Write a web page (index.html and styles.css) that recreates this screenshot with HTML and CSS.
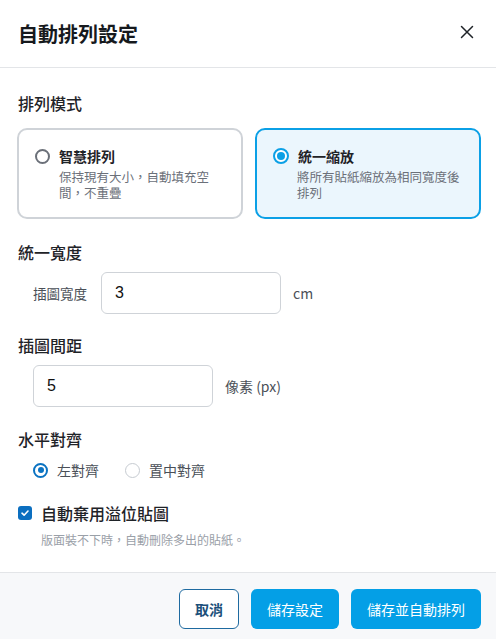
FILE: index.html
```html
<!DOCTYPE html>
<html lang="zh-Hant">
<head>
<meta charset="utf-8">
<title>自動排列設定</title>
<link rel="stylesheet" href="styles.css">
</head>
<body>
<div class="dialog">
  <header class="head">
    <h1 class="title">自動排列設定</h1>
    <span class="close">
      <svg width="14" height="14" viewBox="0 0 14 14"><path d="M1.5 1.5L12.5 12.5M12.5 1.5L1.5 12.5" stroke="#1f2328" stroke-width="1.5" stroke-linecap="round"/></svg>
    </span>
  </header>
  <main class="body">
    <h2 class="sec">排列模式</h2>
    <div class="cards">
      <div class="card">
        <div class="card-top"><span class="radio-g"></span><span class="card-title">智慧排列</span></div>
        <p class="card-desc">保持現有大小，自動填充空間，不重疊</p>
      </div>
      <div class="card on">
        <div class="card-top"><span class="radio-b"></span><span class="card-title">統一縮放</span></div>
        <p class="card-desc">將所有貼紙縮放為相同寬度後排列</p>
      </div>
    </div>

    <h2 class="sec s2">統一寬度</h2>
    <div class="row r1">
      <span class="lbl">插圖寬度</span>
      <div class="inp">3</div>
      <span class="unit">cm</span>
    </div>

    <h2 class="sec s3">插圖間距</h2>
    <div class="row r2">
      <div class="inp">5</div>
      <span class="unit">像素 (px)</span>
    </div>

    <h2 class="sec s4">水平對齊</h2>
    <div class="aligns">
      <span class="opt"><span class="rd on"></span>左對齊</span>
      <span class="opt"><span class="rd"></span>置中對齊</span>
    </div>

    <div class="chk-row">
      <span class="chk"><svg width="10" height="10" viewBox="0 0 10 10"><path d="M2 5.2L4.1 7.2L8 3" fill="none" stroke="#fff" stroke-width="1.6" stroke-linecap="round" stroke-linejoin="round"/></svg></span>
      <span class="chk-lbl">自動棄用溢位貼圖</span>
    </div>
    <p class="hint">版面裝不下時，自動刪除多出的貼紙。</p>
  </main>
  <footer class="foot">
    <button class="btn ghost">取消</button>
    <button class="btn pri">儲存設定</button>
    <button class="btn pri">儲存並自動排列</button>
  </footer>
</div>
</body>
</html>
```
FILE: styles.css
```css
* { box-sizing: border-box; }
html, body { margin: 0; padding: 0; background: #fff; }
body {
  font-family: "Noto Sans CJK TC", "Noto Sans", "Liberation Sans", sans-serif;
  color: #1f2328;
  width: 496px;
  height: 639px;
  overflow: hidden;
}
.dialog { display: flex; flex-direction: column; }
.head {
  height: 68px;
  border-bottom: 1px solid #e3e5e8;
  display: flex;
  align-items: center;
  justify-content: space-between;
  padding: 0 22px 0 18px;
}
.title { margin: 0; font-size: 20px; font-weight: 700; line-height: 28px; color: #16191d; }
.close { display: flex; width: 14px; height: 14px; margin-top: -4px; }
.body { padding: 23px 15px 0 17px; height: 504px; }
.sec { margin: 0; font-size: 16px; font-weight: 500; line-height: 24px; color: #1f2328; padding-left: 1px; }
.s2 { margin-top: 21px; }
.s3 { margin-top: 19px; }
.s4 { margin-top: 20px; }
.cards { display: grid; grid-template-columns: 1fr 1fr; gap: 12px; margin-top: 13px; }
.card {
  border: 2px solid #cfd3d8;
  border-radius: 10px;
  padding: 16px 16px 16px 16px;
  height: 91px;
  background: #fff;
}
.card.on { border-color: #0ba0e6; background: #ebf6fd; }
.card-top { display: flex; align-items: center; height: 20px; }
.radio-g { width: 15px; height: 15px; border: 2px solid #6b7079; border-radius: 50%; margin-right: 9px; }
.radio-b { width: 16px; height: 16px; border: 2px solid #0ba0e6; border-radius: 50%; margin-right: 9px; display: flex; align-items: center; justify-content: center; background: #fff; }
.radio-b::after { content: ""; width: 8px; height: 8px; border-radius: 50%; background: #0ba0e6; }
.card-title { font-size: 14px; font-weight: 700; color: #1f2328; }
.card-desc { margin: 3px 0 0 24px; font-size: 12.5px; line-height: 16px; color: #6b7079; }
.row { display: flex; align-items: center; margin-top: 8px; }
.r1 { padding-left: 16px; }
.r2 { padding-left: 16px; }
.lbl { font-size: 13.5px; color: #4a4f57; width: 68px; }
.inp {
  width: 180px; height: 42px;
  border: 1px solid #cfd3d8;
  border-radius: 6px;
  padding: 0 13px;
  display: flex; align-items: center;
  font-family: "Liberation Sans", Arial, sans-serif;
  font-size: 16px;
  color: #111;
}
.unit { margin-left: 12px; font-size: 14px; color: #4a4f57; }
.aligns { display: flex; align-items: center; padding-left: 16px; margin-top: 9px; height: 20px; }
.opt { display: flex; align-items: center; font-size: 14px; color: #4a4f57; margin-right: 26px; }
.rd { width: 15px; height: 15px; border: 1px solid #c6cbd1; border-radius: 50%; margin-right: 9px; background: #fff; display: flex; align-items: center; justify-content: center; }
.rd.on { border: 2px solid #0b73c2; }
.rd.on::after { content: ""; width: 6px; height: 6px; border-radius: 50%; background: #0b73c2; }
.chk-row { display: flex; align-items: center; margin-top: 21px; height: 24px; padding-left: 1px; }
.chk { width: 14px; height: 14px; border-radius: 3px; background: #0b6fc0; display: flex; align-items: center; justify-content: center; margin-right: 9px; }
.chk-lbl { font-size: 16px; font-weight: 500; color: #1f2328; }
.hint { margin: 7px 0 0 24px; font-size: 12px; line-height: 16px; color: #9aa0a8; }
.foot {
  border-top: 1px solid #e3e5e8;
  background: #f7f8fa;
  display: flex;
  justify-content: flex-end;
  gap: 12px;
  padding: 16px 15px 16px 0;
  height: 73px;
}
.btn {
  height: 40px;
  border-radius: 6px;
  font-family: inherit;
  font-size: 14px;
  padding: 0;
  cursor: pointer;
}
.ghost { width: 60px; background: #fff; border: 1px solid #1e6aa0; color: #1b4f7a; font-weight: 700; }
.pri { background: #049fe6; border: none; color: #fff; font-weight: 400; }
.pri:nth-child(2) { width: 88px; }
.pri:nth-child(3) { width: 130px; }
```
